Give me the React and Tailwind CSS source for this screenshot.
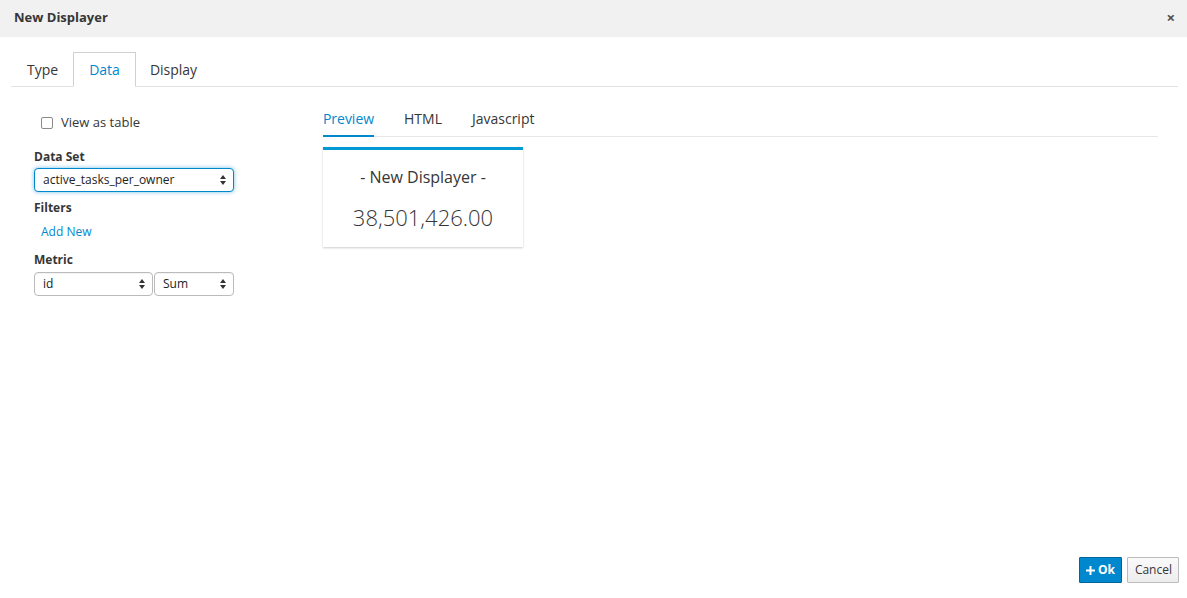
import React from "react";

function Arrows() {
    return (
        <svg width="6" height="10" viewBox="0 0 6 10" className="text-[#333]">
            <path d="M3 0 L6 4 L0 4 Z" fill="currentColor" />
            <path d="M3 10 L6 6 L0 6 Z" fill="currentColor" />
        </svg>
    );
}

function FakeSelect({ value, focused, className }) {
    return (
        <div
            className={
                "h-[24px] flex items-center justify-between pl-[8px] pr-[7px] rounded-[4px] bg-white text-[12px] text-[#222] " +
                (focused
                    ? "border border-[#0088ce] shadow-[0_0_4px_rgba(0,136,206,0.55)] "
                    : "border border-[#bbb] shadow-[inset_0_1px_1px_rgba(0,0,0,0.05)] ") +
                className
            }
        >
            <span>{value}</span>
            <Arrows />
        </div>
    );
}

export default function App() {
    return (
        <div
            className="w-full h-[598px] flex flex-col bg-white text-[#363636]"
            style={{ fontFamily: '"Open Sans", "Noto Sans", sans-serif' }}
        >
            {/* Header */}
            <div className="h-[37px] bg-[#f1f1f1] flex items-center justify-between pl-[14px] pr-[12px] pb-[2px] shrink-0">
                <h4 className="text-[13px] font-bold text-[#363636]">New Displayer</h4>
                <span className="text-[15px] font-bold text-[#4d4d4d] leading-none">×</span>
            </div>

            {/* Body */}
            <div className="flex-1 flex flex-col px-[11px] pt-[15px]">
                {/* Main tabs */}
                <div className="flex items-end h-[35px] border-b border-[#e2e2e2] -mr-[2px]">
                    <div className="h-[34px] pl-[16px] pr-[15px] flex items-center text-[14px] text-[#363636]">Type</div>
                    <div className="h-[35px] -mb-px px-[15px] flex items-center text-[14px] text-[#0088ce] bg-white border border-[#d1d1d1] border-b-white">
                        Data
                    </div>
                    <div className="h-[34px] px-[14px] flex items-center text-[14px] text-[#363636]">Display</div>
                </div>

                <div className="flex">
                    {/* Left column */}
                    <div className="w-[200px] ml-[23px] flex flex-col text-[12px]">
                        <label className="flex items-center gap-[8px] mt-[27px] ml-[7px] h-[18px] text-[13px] text-[#363636]">
                            <span className="w-[12px] h-[12px] border border-[#8a8a8a] rounded-[2px] bg-white" />
                            View as table
                        </label>
                        <div className="mt-[17px] font-bold text-[12px] leading-[16px]">Data Set</div>
                        <FakeSelect value="active_tasks_per_owner" focused className="mt-[3px] w-[200px]" />
                        <div className="mt-[8px] font-bold text-[12px] leading-[16px]">Filters</div>
                        <a className="mt-[8px] ml-[7px] text-[12px] leading-[16px] text-[#0088ce]">Add New</a>
                        <div className="mt-[12px] font-bold text-[12px] leading-[16px]">Metric</div>
                        <div className="mt-[4px] flex gap-[1px]">
                            <FakeSelect value="id" className="w-[119px]" />
                            <FakeSelect value="Sum" className="w-[80px]" />
                        </div>
                    </div>

                    {/* Right column */}
                    <div className="ml-[89px] flex-1 mr-[18px] flex flex-col">
                        <div className="mt-[15px] flex border-b border-[#e7e7e7] h-[35px] pb-[1px] text-[14px]">
                            <div className="w-[51px] flex items-center justify-center border-b-2 border-[#0088ce] text-[#0088ce] -mb-[2px]">
                                Preview
                            </div>
                            <div className="ml-[30px] flex items-center">HTML</div>
                            <div className="ml-[30px] flex items-center">Javascript</div>
                        </div>
                        <div className="mt-[10px] w-[200px] h-[100px] border-t-[3px] border-[#0099d3] bg-white shadow-[0_1px_2px_rgba(0,0,0,0.2)] flex flex-col items-center">
                            <div className="mt-[16px] text-[16px] text-[#363636] leading-[22px]">- New Displayer -</div>
                            <div className="mt-[16px] text-[22px] font-light text-[#363636] leading-[26px]">38,501,426.00</div>
                        </div>
                    </div>
                </div>

                {/* Footer */}
                <div className="mt-auto flex justify-end gap-[5px] pb-[15px] -mr-[3px]">
                    <button className="h-[26px] px-[6px] flex items-center gap-[3px] bg-[#0088ce] border border-[#00659c] rounded-[1px] text-white text-[12px] font-bold">
                        <svg width="9" height="9" viewBox="0 0 9 9">
                            <path d="M3.5 0h2v3.5H9v2H5.5V9h-2V5.5H0v-2h3.5z" fill="white" />
                        </svg>
                        Ok
                    </button>
                    <button className="h-[26px] pl-[7px] pr-[6px] flex items-center bg-gradient-to-b from-[#fafafa] to-[#ededed] border border-[#bbb] rounded-[1px] text-[#363636] text-[12px]">
                        Cancel
                    </button>
                </div>
            </div>
        </div>
    );
}
